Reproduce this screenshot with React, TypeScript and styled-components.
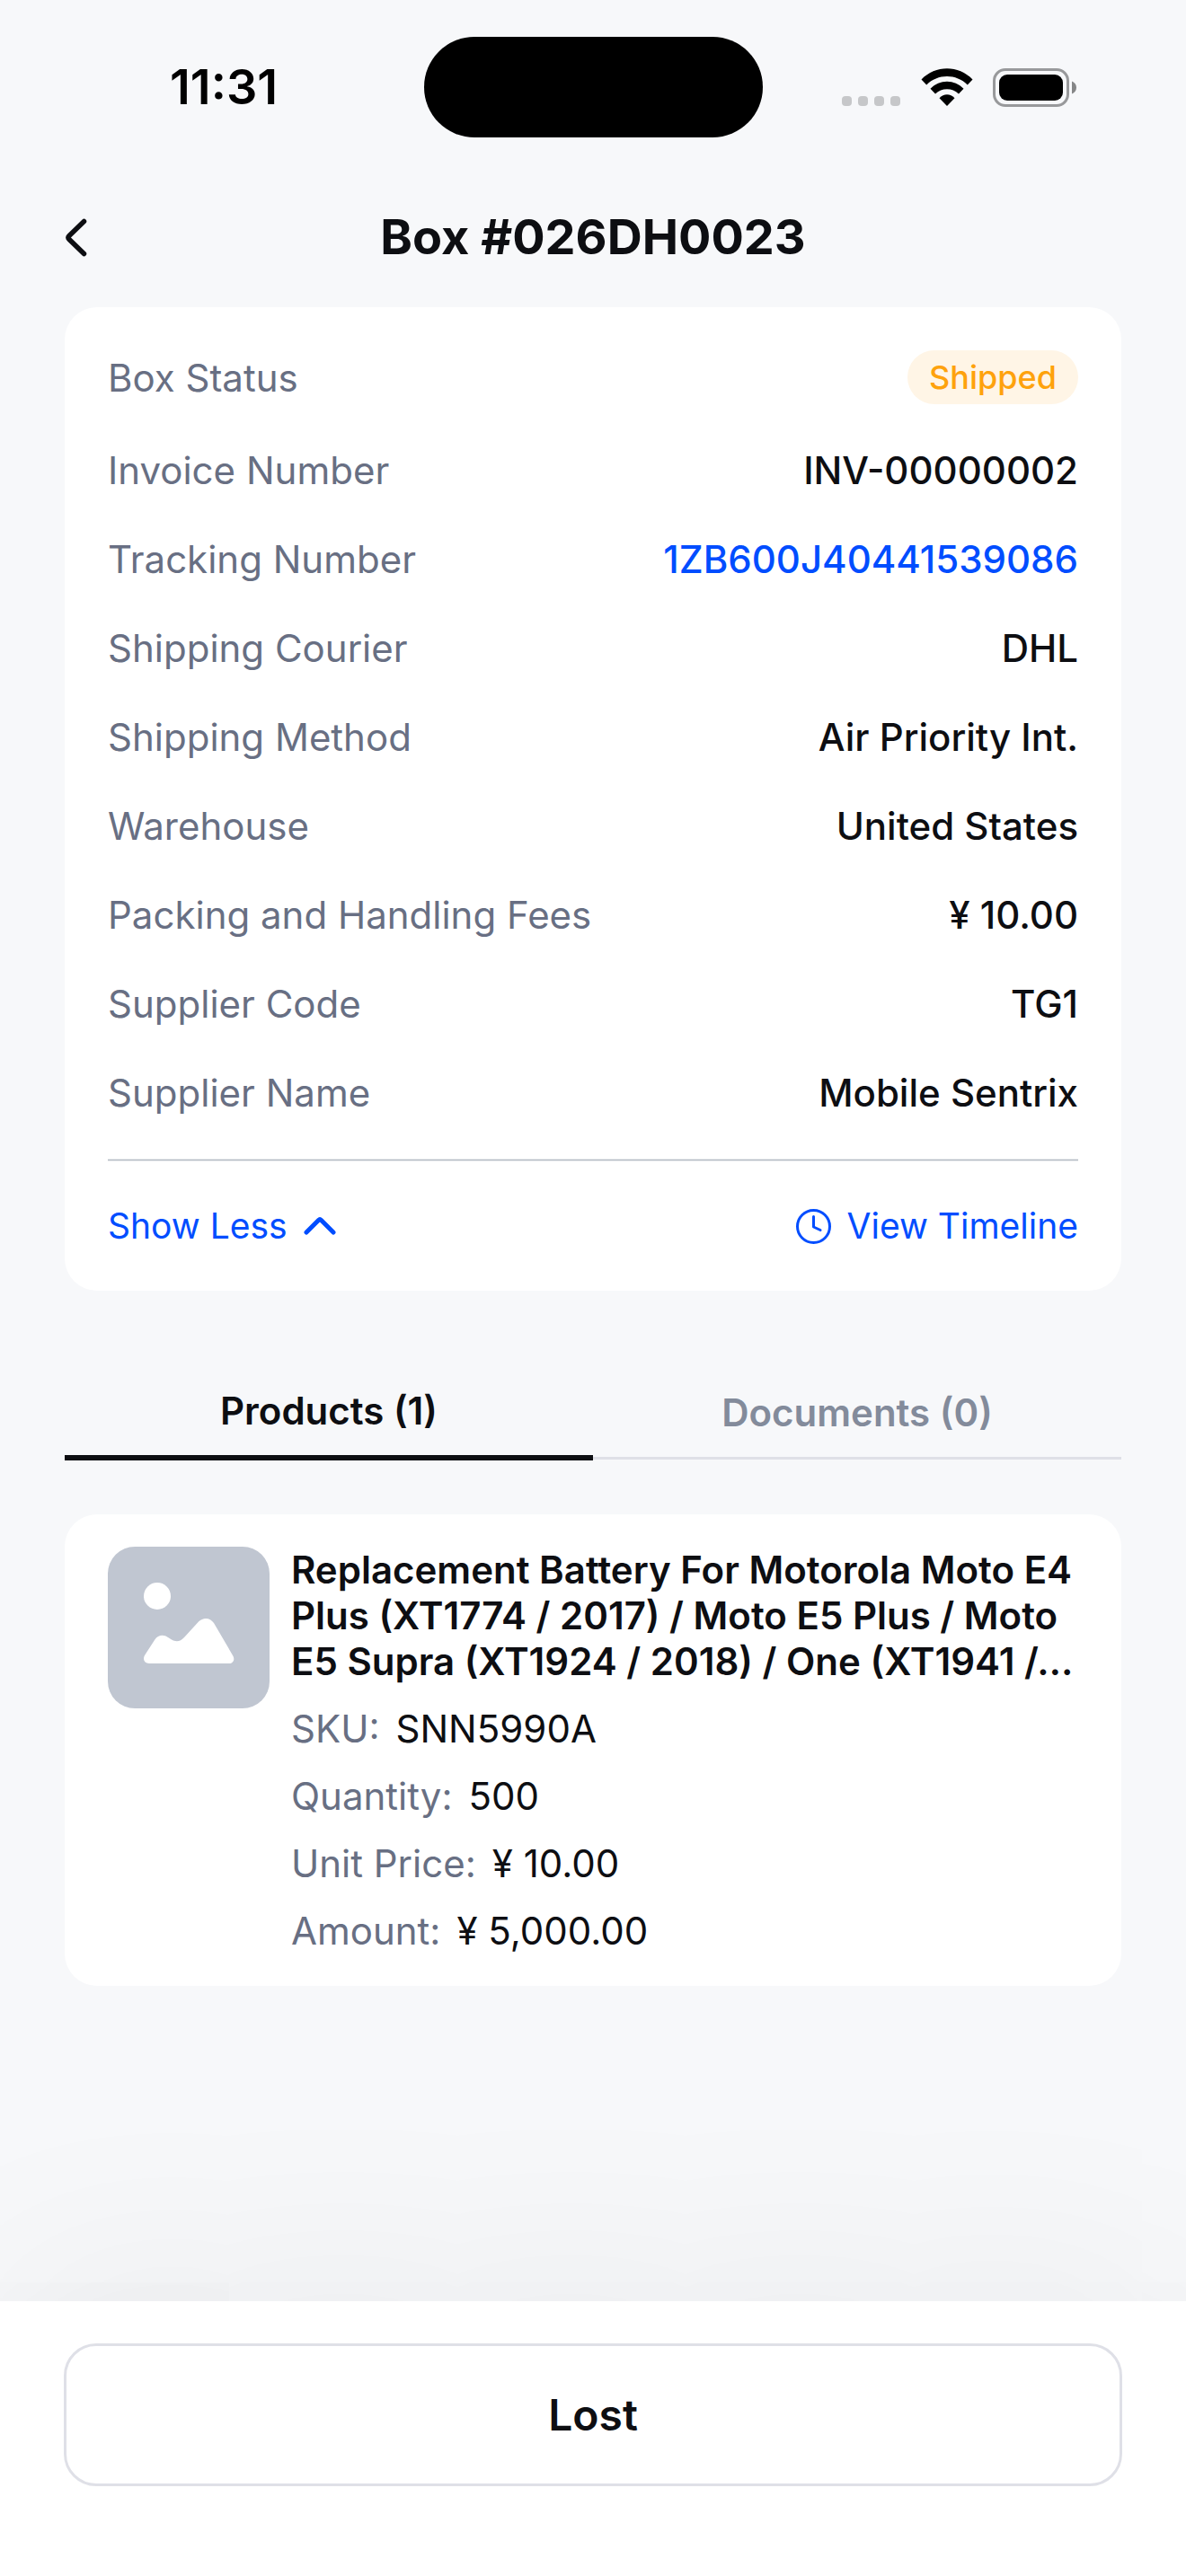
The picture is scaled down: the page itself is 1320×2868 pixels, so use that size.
import { useState } from "react";
import styled, { createGlobalStyle } from "styled-components";

const GlobalStyle = createGlobalStyle`
  * {
    box-sizing: border-box;
  }

  body {
    margin: 0;
    background: #f7f8fa;
    color: #0d0e12;
    font-family: Inter, "Liberation Sans", sans-serif;
    font-size: 42px;
    line-height: 51px;
  }

  button {
    padding: 0;
    border: 0;
    background: none;
    color: inherit;
    font: inherit;
    cursor: pointer;
  }

  svg {
    display: block;
    flex: none;
  }
`;

const Screen = styled.div`
  display: flex;
  flex-direction: column;
  min-height: 100vh;
`;

const StatusBar = styled.div`
  display: grid;
  grid-template-columns: 1fr auto 1fr;
  align-items: center;
  padding: 41px 122px 0;
  color: #000;
`;

const Time = styled.time`
  padding-left: 67px;
  font-size: 54px;
  font-weight: 600;
  line-height: 66px;
`;

const Island = styled.div`
  width: 377px;
  height: 112px;
  border-radius: 56px;
  background: #000;
`;

const StatusIcons = styled.div`
  display: flex;
  justify-content: flex-end;
  align-items: center;
  gap: 22px;
`;

const Header = styled.header`
  display: grid;
  grid-template-columns: 72px 1fr 72px;
  align-items: center;
  padding: 78px 72px 45px;
`;

const BackButton = styled.button`
  display: flex;
  height: 66px;
  align-items: center;
`;

const Title = styled.h1`
  margin: 0;
  font-size: 54px;
  font-weight: 700;
  line-height: 66px;
  text-align: center;
`;

const Main = styled.main`
  flex: 1;
  padding: 0 72px;
`;

const Card = styled.section`
  padding: 48px;
  border-radius: 36px;
  background: #fff;
`;

const Details = styled.dl`
  display: flex;
  flex-direction: column;
  gap: 48px;
  margin: 0;
`;

const DetailRow = styled.div`
  display: flex;
  justify-content: space-between;
  align-items: center;
`;

const Label = styled.dt`
  color: #686f83;
`;

const Value = styled.dd`
  margin: 0;
  font-weight: 500;

  a {
    color: #004dff;
    text-decoration: none;
  }
`;

const Badge = styled.span`
  display: block;
  padding: 0 24px;
  border-radius: 30px;
  background: #fff5e6;
  color: #fea20d;
  font-size: 36px;
  line-height: 60px;
`;

const Divider = styled.hr`
  height: 3px;
  margin: 48px 0;
  border: solid #e6e9ec;
  border-width: 1px 0;
  background: #b4bbc4;
`;

const CardActions = styled.div`
  display: flex;
  justify-content: space-between;
  align-items: center;
`;

const LinkButton = styled.button`
  display: flex;
  align-items: center;
  gap: 18px;
  color: #004dff;
  font-size: 39px;
  line-height: 48px;
`;

const Tabs = styled.div`
  display: flex;
  align-items: center;
  margin: 84px 0 60px;
`;

const Tab = styled.button<{ $active: boolean }>`
  flex: 1;
  padding: 24px 0;
  border-bottom: ${({ $active }) =>
    $active ? "6px solid #0d0e12" : "3px solid #dfe0e7"};
  color: ${({ $active }) => ($active ? "#0d0e12" : "#838b9b")};
  font-weight: 600;
`;

const ProductCard = styled.article`
  display: flex;
  align-items: flex-start;
  gap: 24px;
  padding: 36px 48px;
  border-radius: 36px;
  background: #fff;
`;

const Thumbnail = styled.div`
  flex: none;
  width: 180px;
  height: 180px;
  border-radius: 30px;
  background: #c0c6d1;
`;

const ProductInfo = styled.div`
  flex: 1;
  min-width: 0;
`;

const ProductName = styled.h2`
  margin: 0;
  font-size: 42px;
  font-weight: 600;
`;

const Specs = styled.dl`
  display: flex;
  flex-direction: column;
  gap: 24px;
  margin: 24px 0 0;
`;

const Spec = styled.div`
  display: flex;
  gap: 18px;

  dd {
    margin: 0;
  }
`;

const Footer = styled.footer`
  padding: 47px 71px 100px;
  background: #fff;
  box-shadow: 0 0 240px rgba(0, 0, 0, 0.08);
`;

const LostButton = styled.button`
  display: block;
  width: 100%;
  padding: 48px;
  border: 3px solid #dfe0e7;
  border-radius: 36px;
  font-size: 48px;
  font-weight: 600;
  line-height: 57px;
`;

const details = [
  { label: "Invoice Number", value: "INV-00000002" },
  { label: "Tracking Number", value: "1ZB600J40441539086", link: true },
  { label: "Shipping Courier", value: "DHL" },
  { label: "Shipping Method", value: "Air Priority Int." },
  { label: "Warehouse", value: "United States" },
  { label: "Packing and Handling Fees", value: "¥ 10.00" },
  { label: "Supplier Code", value: "TG1" },
  { label: "Supplier Name", value: "Mobile Sentrix" },
];

const specs = [
  { label: "SKU:", value: "SNN5990A" },
  { label: "Quantity:", value: "500" },
  { label: "Unit Price:", value: "¥ 10.00" },
  { label: "Amount:", value: "¥ 5,000.00" },
];

function SignalIcon() {
  return (
    <svg width="66" height="42" viewBox="0 0 66 42" fill="#c6c7c9">
      <rect x="0" y="31" width="11" height="11" rx="4" />
      <rect x="18" y="31" width="11" height="11" rx="4" />
      <rect x="36" y="31" width="11" height="11" rx="4" />
      <rect x="54" y="31" width="11" height="11" rx="4" />
    </svg>
  );
}

function WifiIcon() {
  return (
    <svg width="58" height="42" viewBox="0 0 58 42">
      <path d="M0.5 12.5C16 -3.8 42 -3.8 57.5 12.5L51.8 18.5C39.5 5.8 18.5 5.8 6.2 18.5Z" />
      <path d="M10.5 22.7C20.5 12 37.5 12 47.5 22.7L42 28.6C35 21.3 23 21.3 16 28.6Z" />
      <path d="M20.5 33.2C25 27.8 33 27.8 37.5 33.2L29 42Z" />
    </svg>
  );
}

function BatteryIcon() {
  return (
    <svg width="93" height="43" viewBox="0 0 93 43">
      <rect
        x="1.5"
        y="1.5"
        width="82"
        height="40"
        rx="12.5"
        fill="none"
        stroke="#98999b"
        strokeWidth="3"
      />
      <rect x="7" y="7" width="71" height="29" rx="9" />
      <path
        d="M88 14.5C91.2 15.7 93 18.2 93 21.5C93 24.8 91.2 27.3 88 28.5Z"
        fill="#858687"
      />
    </svg>
  );
}

function BackIcon() {
  return (
    <svg width="27" height="44" viewBox="0 0 27 44" fill="none">
      <path
        d="M21.5 4.5L5 20.5Q3 22.5 5 24.5L21.5 40.5"
        stroke="#0d0e12"
        strokeWidth="5.5"
        strokeLinecap="round"
      />
    </svg>
  );
}

function ChevronIcon({ up }: { up: boolean }) {
  return (
    <svg width="38" height="24" viewBox="0 0 38 24" fill="none">
      <path
        d={
          up
            ? "M3 19L16.5 5.5Q18 4 19.5 5.5L33 19"
            : "M3 5L16.5 18.5Q18 20 19.5 18.5L33 5"
        }
        stroke="currentColor"
        strokeWidth="5"
        strokeLinecap="round"
      />
    </svg>
  );
}

function ClockIcon() {
  return (
    <svg width="39" height="39" viewBox="0 0 39 39" fill="none">
      <circle cx="19.5" cy="19.5" r="18" stroke="currentColor" strokeWidth="3" />
      <path
        d="M19.5 8.5V20L27 23.5"
        stroke="currentColor"
        strokeWidth="3"
        strokeLinecap="round"
        strokeLinejoin="round"
      />
    </svg>
  );
}

function ImageIcon() {
  return (
    <svg width="180" height="180" viewBox="0 0 180 180" fill="#fff">
      <circle cx="55" cy="55" r="15" />
      <path d="M46 130C41 130 38.5 125.5 41 121L52 104C56 98 62 97.5 67 101L71 103.5C76 106.5 81 105.5 85 101L101 83.5C106.500 78 114 79 118 85L139 121C142 125.5 139.5 130 135 130Z" />
    </svg>
  );
}

function App() {
  const [expanded, setExpanded] = useState(true);
  const [tab, setTab] = useState("products");

  return (
    <>
      <GlobalStyle />
      <Screen>
        <StatusBar>
          <Time>11:31</Time>
          <Island />
          <StatusIcons>
            <SignalIcon />
            <WifiIcon />
            <BatteryIcon />
          </StatusIcons>
        </StatusBar>

        <Header>
          <BackButton type="button" aria-label="Back">
            <BackIcon />
          </BackButton>
          <Title>Box #026DH0023</Title>
        </Header>

        <Main>
          <Card>
            <Details>
              <DetailRow>
                <Label>Box Status</Label>
                <Value>
                  <Badge>Shipped</Badge>
                </Value>
              </DetailRow>
              {expanded &&
                details.map(({ label, value, link }) => (
                  <DetailRow key={label}>
                    <Label>{label}</Label>
                    <Value>{link ? <a href="#">{value}</a> : value}</Value>
                  </DetailRow>
                ))}
            </Details>
            <Divider />
            <CardActions>
              <LinkButton
                type="button"
                aria-expanded={expanded}
                onClick={() => setExpanded(!expanded)}
              >
                {expanded ? "Show Less" : "Show More"}
                <ChevronIcon up={expanded} />
              </LinkButton>
              <LinkButton type="button">
                <ClockIcon />
                View Timeline
              </LinkButton>
            </CardActions>
          </Card>

          <Tabs role="tablist">
            <Tab
              type="button"
              role="tab"
              aria-selected={tab === "products"}
              $active={tab === "products"}
              onClick={() => setTab("products")}
            >
              Products (1)
            </Tab>
            <Tab
              type="button"
              role="tab"
              aria-selected={tab === "documents"}
              $active={tab === "documents"}
              onClick={() => setTab("documents")}
            >
              Documents (0)
            </Tab>
          </Tabs>

          {tab === "products" && (
            <ProductCard>
              <Thumbnail>
                <ImageIcon />
              </Thumbnail>
              <ProductInfo>
                <ProductName>
                  Replacement Battery For Motorola Moto E4 Plus (XT1774 / 2017)
                  / Moto E5 Plus / Moto E5 Supra (XT1924 / 2018) / One (XT1941
                  /…
                </ProductName>
                <Specs>
                  {specs.map(({ label, value }) => (
                    <Spec key={label}>
                      <Label>{label}</Label>
                      <dd>{value}</dd>
                    </Spec>
                  ))}
                </Specs>
              </ProductInfo>
            </ProductCard>
          )}
        </Main>

        <Footer>
          <LostButton type="button">Lost</LostButton>
        </Footer>
      </Screen>
    </>
  );
}

export default App;
